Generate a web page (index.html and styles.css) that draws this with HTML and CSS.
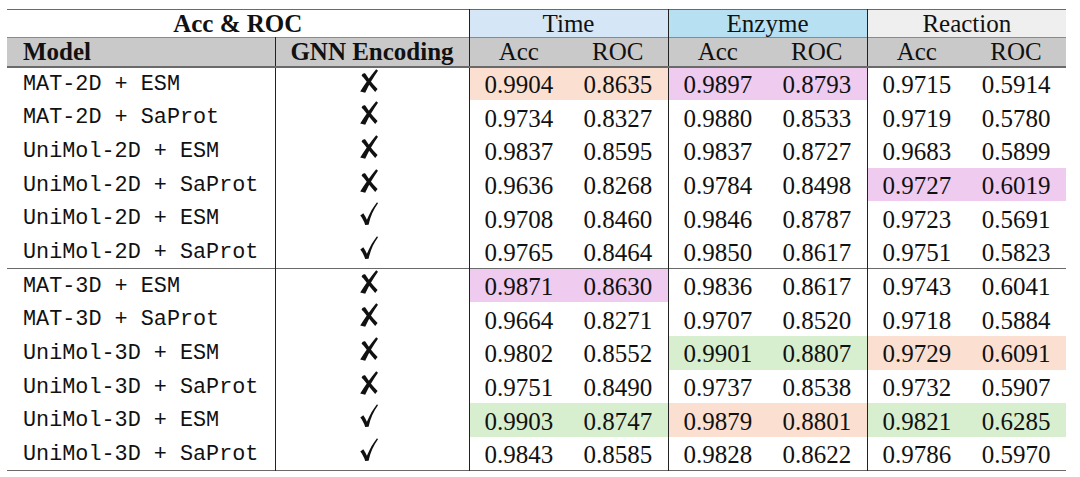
FILE: index.html
```html
<!DOCTYPE html>
<html>
<head>
<meta charset="utf-8">
<link rel="stylesheet" href="styles.css">
</head>
<body>
<svg class="defs" width="0" height="0" aria-hidden="true">
  <defs>
    <symbol id="xmark" viewBox="0 0 18 24">
      <path d="M16.2,0.2 L18,1.7 C13.8,7.6 9.2,15 5.2,23.8 L0.2,22.5 C5.2,14.2 10.9,6.8 16.2,0.2 Z"/>
      <path d="M1.6,6.7 C2.6,4.5 4.1,3.8 5.5,4.7 C8.7,9.6 12.1,14.8 17.6,19.9 L15.2,23 C10.6,17.8 6.5,12.5 3.2,8.3 Z"/>
    </symbol>
    <symbol id="cmark" viewBox="0 0 18 23">
      <path d="M0.3,13.6 L3.3,11.2 C4.8,13.2 6,15.5 6.9,17.7 C9.7,11 13,5.2 17,0.2 L18,1.2 C13.6,7.2 10.5,14 8.6,22.8 L5.2,22.9 C4.1,19.6 2.4,16.2 0.3,13.6 Z"/>
    </symbol>
  </defs>
</svg>
<table class="res">
  <colgroup>
    <col class="c-model"><col class="c-gnn">
    <col class="c-a"><col class="c-b"><col class="c-a"><col class="c-b"><col class="c-a"><col class="c-b">
  </colgroup>
  <thead>
    <tr class="h1">
      <th colspan="2" class="bold">Acc &amp; ROC</th>
      <th colspan="2" class="g-time vl">Time</th>
      <th colspan="2" class="g-enz vl">Enzyme</th>
      <th colspan="2" class="g-rea vl">Reaction</th>
    </tr>
    <tr class="h2">
      <th class="bold left">Model</th>
      <th class="bold vl">GNN Encoding</th>
      <th class="vl">Acc</th><th>ROC</th>
      <th class="vl">Acc</th><th>ROC</th>
      <th class="vl">Acc</th><th>ROC</th>
    </tr>
  </thead>
  <tbody>
    <tr><td class="m">MAT-2D + ESM</td><td class="vl mk"><svg class="ic-x"><use href="#xmark"/></svg></td><td class="vl o">0.9904</td><td class="o">0.8635</td><td class="vl p">0.9897</td><td class="p">0.8793</td><td class="vl">0.9715</td><td>0.5914</td></tr>
    <tr><td class="m">MAT-2D + SaProt</td><td class="vl mk"><svg class="ic-x"><use href="#xmark"/></svg></td><td class="vl">0.9734</td><td>0.8327</td><td class="vl">0.9880</td><td>0.8533</td><td class="vl">0.9719</td><td>0.5780</td></tr>
    <tr><td class="m">UniMol-2D + ESM</td><td class="vl mk"><svg class="ic-x"><use href="#xmark"/></svg></td><td class="vl">0.9837</td><td>0.8595</td><td class="vl">0.9837</td><td>0.8727</td><td class="vl">0.9683</td><td>0.5899</td></tr>
    <tr><td class="m">UniMol-2D + SaProt</td><td class="vl mk"><svg class="ic-x"><use href="#xmark"/></svg></td><td class="vl">0.9636</td><td>0.8268</td><td class="vl">0.9784</td><td>0.8498</td><td class="vl p">0.9727</td><td class="p">0.6019</td></tr>
    <tr><td class="m">UniMol-2D + ESM</td><td class="vl mk"><svg class="ic-c"><use href="#cmark"/></svg></td><td class="vl">0.9708</td><td>0.8460</td><td class="vl">0.9846</td><td>0.8787</td><td class="vl">0.9723</td><td>0.5691</td></tr>
    <tr><td class="m">UniMol-2D + SaProt</td><td class="vl mk"><svg class="ic-c"><use href="#cmark"/></svg></td><td class="vl">0.9765</td><td>0.8464</td><td class="vl">0.9850</td><td>0.8617</td><td class="vl">0.9751</td><td>0.5823</td></tr>
    <tr class="mid"><td class="m">MAT-3D + ESM</td><td class="vl mk"><svg class="ic-x"><use href="#xmark"/></svg></td><td class="vl p">0.9871</td><td class="p">0.8630</td><td class="vl">0.9836</td><td>0.8617</td><td class="vl">0.9743</td><td>0.6041</td></tr>
    <tr><td class="m">MAT-3D + SaProt</td><td class="vl mk"><svg class="ic-x"><use href="#xmark"/></svg></td><td class="vl">0.9664</td><td>0.8271</td><td class="vl">0.9707</td><td>0.8520</td><td class="vl">0.9718</td><td>0.5884</td></tr>
    <tr><td class="m">UniMol-3D + ESM</td><td class="vl mk"><svg class="ic-x"><use href="#xmark"/></svg></td><td class="vl">0.9802</td><td>0.8552</td><td class="vl g">0.9901</td><td class="g">0.8807</td><td class="vl o">0.9729</td><td class="o">0.6091</td></tr>
    <tr><td class="m">UniMol-3D + SaProt</td><td class="vl mk"><svg class="ic-x"><use href="#xmark"/></svg></td><td class="vl">0.9751</td><td>0.8490</td><td class="vl">0.9737</td><td>0.8538</td><td class="vl">0.9732</td><td>0.5907</td></tr>
    <tr><td class="m">UniMol-3D + ESM</td><td class="vl mk"><svg class="ic-c"><use href="#cmark"/></svg></td><td class="vl g">0.9903</td><td class="g">0.8747</td><td class="vl o">0.9879</td><td class="o">0.8801</td><td class="vl g">0.9821</td><td class="g">0.6285</td></tr>
    <tr class="last"><td class="m">UniMol-3D + SaProt</td><td class="vl mk"><svg class="ic-c"><use href="#cmark"/></svg></td><td class="vl">0.9843</td><td>0.8585</td><td class="vl">0.9828</td><td>0.8622</td><td class="vl">0.9786</td><td>0.5970</td></tr>
  </tbody>
</table>
</body>
</html>
```

FILE: styles.css
```css
html, body {
  margin: 0;
  padding: 0;
  background: #ffffff;
}

.defs {
  position: absolute;
  width: 0;
  height: 0;
  overflow: hidden;
}

.res {
  margin: 9px 0 0 7px;
  width: 1059px;
  table-layout: fixed;
  border-collapse: collapse;
  font-family: "Liberation Serif", "Times New Roman", serif;
  font-size: 25px;
  color: #111;
  line-height: 1;
}

.c-model { width: 268px; }
.c-gnn { width: 194px; }
.c-a { width: 99px; }
.c-b { width: 100px; }

.res th,
.res td {
  padding: 0;
  text-align: center;
  font-weight: normal;
  white-space: nowrap;
}

.res .bold { font-weight: bold; }
.res .left { text-align: left; padding-left: 16px; }

.h1 { height: 28px; border-top: 1.5px solid #6a6a6a; }
.h1 th { vertical-align: middle; padding-top: 0; }
.h2 { height: 29px; background: #c9c9c9; border-top: 1px solid #8a8a8a; border-bottom: 2px solid #6a6a6a; }

.g-time { background: #d5e6f6; }
.g-enz { background: #b7e1f2; }
.g-rea { background: #efefef; }

.res tbody tr { height: 33.7px; }
.res tbody td { padding-top: 2px; }
.res tr.mid { border-top: 1.5px solid #6a6a6a; }
.res tr.last { border-bottom: 1.5px solid #6a6a6a; }

.vl { border-left: 1px solid #222; }

.res td.m {
  text-align: left;
  padding-left: 16px;
  font-family: "Liberation Mono", "Courier New", monospace;
  font-size: 21.8px;
}

.res td.mk {
  vertical-align: top;
  padding-top: 1px;
}

.ic-x,
.ic-c {
  display: block;
  margin: 0 auto;
  fill: #111;
  position: relative;
  left: -3px;
}
.ic-x { width: 18px; height: 24px; }
.ic-c { width: 18px; height: 23px; }

.o { background: #fbe0d1; }
.p { background: #eecbef; }
.g { background: #d7efcf; }
```
